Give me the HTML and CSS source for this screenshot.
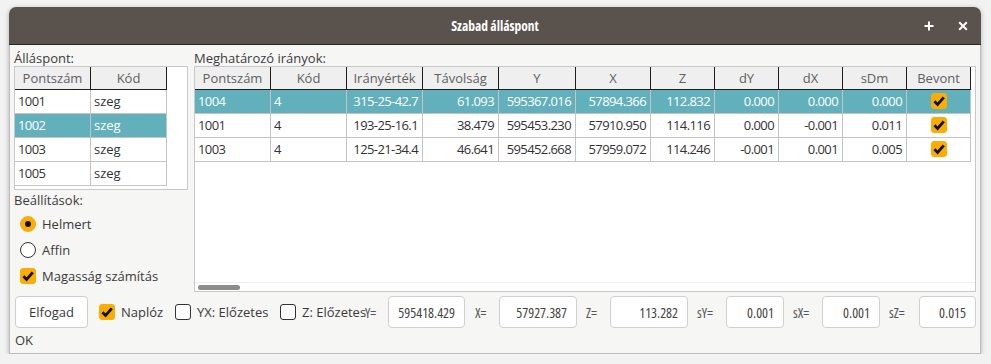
FILE: index.html
```html
<!DOCTYPE html>
<html lang="hu">
<head>
<meta charset="utf-8">
<title>Szabad álláspont</title>
<link rel="stylesheet" href="styles.css">
</head>
<body>
<div class="window">
  <div class="titlebar">
    <div class="tb-spacer"></div>
    <div class="title">Szabad álláspont</div>
    <div class="tb-btns">
      <span class="tb-btn"><svg width="12" height="12" viewBox="0 0 12 12"><path d="M6 1.5V10.5M1.5 6H10.5" stroke="#fff" stroke-width="2"/></svg></span>
      <span class="tb-btn"><svg width="12" height="12" viewBox="0 0 12 12"><path d="M2.2 2.2L9.8 9.8M9.8 2.2L2.2 9.8" stroke="#fff" stroke-width="2"/></svg></span>
    </div>
  </div>
  <div class="content">
    <div class="top">
      <div class="left">
        <div class="label">Álláspont:</div>
        <div class="frame frame-left">
          <div class="grid">
            <div class="row head">
              <div class="c w76 center">Pontszám</div>
              <div class="c w76 center">Kód</div>
            </div>
            <div class="row"><div class="c w76 dig">1001</div><div class="c w76">szeg</div></div>
            <div class="row sel"><div class="c w76 dig">1002</div><div class="c w76">szeg</div></div>
            <div class="row"><div class="c w76 dig">1003</div><div class="c w76">szeg</div></div>
            <div class="row"><div class="c w76 dig">1005</div><div class="c w76">szeg</div></div>
          </div>
        </div>
        <div class="label label-set">Beállítások:</div>
        <div class="opt"><span class="radio on"></span>Helmert</div>
        <div class="opt"><span class="radio"></span>Affin</div>
        <div class="opt"><span class="check on"><svg width="16" height="16" viewBox="0 0 16 16"><path d="M3.4 8.2L6.6 11.4L12.8 4.4" fill="none" stroke="#111" stroke-width="2.8"/></svg></span>Magasság számítás</div>
      </div>
      <div class="right">
        <div class="label">Meghatározó irányok:</div>
        <div class="frame frame-right">
          <div class="grid">
            <div class="row head">
              <div class="c w76 center">Pontszám</div>
              <div class="c w76 center">Kód</div>
              <div class="c w76 center">Irányérték</div>
              <div class="c w76 center">Távolság</div>
              <div class="c w77 center">Y</div>
              <div class="c w75 center">X</div>
              <div class="c w64 center">Z</div>
              <div class="c w64 center">dY</div>
              <div class="c w64 center">dX</div>
              <div class="c w64 center">sDm</div>
              <div class="c w64 center">Bevont</div>
            </div>
            <div class="row sel">
              <div class="c w76 dig">1004</div><div class="c w76">4</div>
              <div class="c w76 num">315-25-42.7</div><div class="c w76 num">61.093</div>
              <div class="c w77 num">595367.016</div><div class="c w75 num">57894.366</div>
              <div class="c w64 num">112.832</div><div class="c w64 num">0.000</div>
              <div class="c w64 num">0.000</div><div class="c w64 num">0.000</div>
              <div class="c w64 center"><span class="check on"><svg width="16" height="16" viewBox="0 0 16 16"><path d="M3.4 8.2L6.6 11.4L12.8 4.4" fill="none" stroke="#111" stroke-width="2.8"/></svg></span></div>
            </div>
            <div class="row">
              <div class="c w76 dig">1001</div><div class="c w76">4</div>
              <div class="c w76 num">193-25-16.1</div><div class="c w76 num">38.479</div>
              <div class="c w77 num">595453.230</div><div class="c w75 num">57910.950</div>
              <div class="c w64 num">114.116</div><div class="c w64 num">0.000</div>
              <div class="c w64 num">-0.001</div><div class="c w64 num">0.011</div>
              <div class="c w64 center"><span class="check on"><svg width="16" height="16" viewBox="0 0 16 16"><path d="M3.4 8.2L6.6 11.4L12.8 4.4" fill="none" stroke="#111" stroke-width="2.8"/></svg></span></div>
            </div>
            <div class="row">
              <div class="c w76 dig">1003</div><div class="c w76">4</div>
              <div class="c w76 num">125-21-34.4</div><div class="c w76 num">46.641</div>
              <div class="c w77 num">595452.668</div><div class="c w75 num">57959.072</div>
              <div class="c w64 num">114.246</div><div class="c w64 num">-0.001</div>
              <div class="c w64 num">0.001</div><div class="c w64 num">0.005</div>
              <div class="c w64 center"><span class="check on"><svg width="16" height="16" viewBox="0 0 16 16"><path d="M3.4 8.2L6.6 11.4L12.8 4.4" fill="none" stroke="#111" stroke-width="2.8"/></svg></span></div>
            </div>
          </div>
          <div class="fill"></div>
          <div class="hscroll"><div class="thumb"></div></div>
        </div>
      </div>
    </div>
    <div class="bottom">
      <div class="btn">Elfogad</div>
      <div class="cgroup g-naplo"><span class="check on"><svg width="16" height="16" viewBox="0 0 16 16"><path d="M3.4 8.2L6.6 11.4L12.8 4.4" fill="none" stroke="#111" stroke-width="2.8"/></svg></span>Naplóz</div>
      <div class="cgroup g-yx"><span class="check"></span>YX: Előzetes</div>
      <div class="cgroup g-z"><span class="check"></span>Z: Előzetes</div>
      <div class="flabel l-y">Y=</div>
      <div class="field f77">595418.429</div>
      <div class="flabel l-x">X=</div>
      <div class="field f78">57927.387</div>
      <div class="flabel l-z">Z=</div>
      <div class="field f78">113.282</div>
      <div class="flabel l-s">sY=</div>
      <div class="field f58">0.001</div>
      <div class="flabel l-s">sX=</div>
      <div class="field f58">0.001</div>
      <div class="flabel l-sz">sZ=</div>
      <div class="field f57">0.015</div>
    </div>
    <div class="status">OK</div>
  </div>
</div>
</body>
</html>
```
FILE: styles.css
```css
* { box-sizing: border-box; }
body {
  margin: 0;
  background: #f2f2f2;
  font-family: "Open Sans", "Noto Sans", sans-serif;
  font-size: 13px;
  color: #3a3a3a;
}
.window {
  margin: 7px 0 0 9px;
  width: 972px;
  height: 347px;
  display: flex;
  flex-direction: column;
  border-radius: 7px 7px 0 0;
  overflow: hidden;
  box-shadow: 0 1px 5px rgba(0,0,0,0.28);
}
.titlebar {
  flex: none;
  height: 38px;
  background: #5a524c;
  border-bottom: 1px solid #2b2724;
  display: grid;
  grid-template-columns: 1fr auto 1fr;
  align-items: center;
}
.title {
  color: #fff;
  font-family: "Open Sans", "Noto Sans", sans-serif;
  font-stretch: 82%;
  font-weight: 700;
  font-size: 13.5px;
}
.tb-btns {
  justify-self: end;
  display: flex;
  gap: 22px;
  padding-right: 12px;
}
.tb-btn { display: flex; width: 12px; height: 12px; }
.content {
  flex: 1;
  background: #f6f6f5;
  border: 1px solid #bdbdbd;
  border-top: none;
  padding: 6px 4px 0 4px;
  display: flex;
  flex-direction: column;
}
.top { display: flex; gap: 6px; height: 241px; }
.left { width: 174px; display: flex; flex-direction: column; }
.right { flex: 1; display: flex; flex-direction: column; }
.label { height: 15px; line-height: 15px; color: #3c3c3c; }
.frame {
  border: 1px solid #c8c8c8;
  background: #fff;
}
.frame-left { height: 124px; }
.frame-right { height: 226px; display: flex; flex-direction: column; }
.grid { display: flex; flex-direction: column; }
.row { display: flex; height: 24px; }
.row.head { height: 23px; }
.c {
  flex: none;
  border-right: 1px solid #c4c4c4;
  border-bottom: 1px solid #c4c4c4;
  padding: 0 3px;
  line-height: 23px;
  white-space: nowrap;
  overflow: hidden;
  color: #333;
}
.head .c {
  background: #efefef;
  color: #606060;
  border-right-color: #1e1e1e;
  border-bottom-color: #1e1e1e;
  line-height: 22px;
}
.sel .c { background: #62b0bc; color: #fff; }
.center { text-align: center; }
.num { text-align: right; letter-spacing: -0.6px; padding-right: 4px; }
.dig { letter-spacing: -0.6px; }
.w76 { width: 76px; }
.w77 { width: 77px; }
.w75 { width: 75px; }
.w64 { width: 64px; }
.c .check { vertical-align: middle; margin-top: -3px; }
.fill { flex: 1; }
.hscroll { height: 9px; border-top: 1px solid #efefef; }
.thumb {
  width: 42px; height: 5px; margin: 2px 0 0 3px;
  border-radius: 3px; background: #8c8c8c;
}
.label-set { margin-top: 3px; margin-bottom: 3px; }
.opt {
  height: 26px;
  display: flex;
  align-items: center;
  gap: 6px;
  padding-left: 6px;
  color: #3a3a3a;
}
.radio {
  width: 16px; height: 16px; border-radius: 50%;
  border: 1px solid #333; background: #fff;
  display: inline-flex; align-items: center; justify-content: center;
  flex: none;
}
.radio.on { background: #fbad00; border-color: #fbad00; }
.radio.on::after {
  content: ""; width: 6px; height: 6px; border-radius: 50%; background: #111;
}
.check {
  width: 16px; height: 16px; border-radius: 3px;
  border: 1px solid #333; background: #fff;
  display: inline-flex; flex: none;
}
.check.on { background: #fbad00; border-color: #fbad00; }
.check svg { margin: -1px; }
.bottom {
  margin-top: 4px;
  height: 32px;
  display: flex;
  align-items: center;
}
.btn {
  width: 73px; height: 32px; margin-left: 1px;
  background: #fff; border: 1px solid #cfcfcf; border-radius: 4px;
  display: flex; align-items: center; justify-content: center;
  color: #3a3a3a;
}
.cgroup {
  display: flex; align-items: center; gap: 6px;
  white-space: nowrap; flex: none; overflow: visible;
}
.g-naplo { margin-left: 11px; width: 76px; }
.g-yx { width: 105px; }
.g-z { width: 85px; }
.flabel {
  flex: none;
  font-stretch: 78%;
  color: #555;
  font-size: 14px;
}
.l-y { width: 23px; }
.l-x { width: 34px; padding-left: 10px; }
.l-z { width: 33px; padding-left: 9px; }
.l-s { width: 38px; padding-left: 9px; }
.l-sz { width: 39px; padding-left: 9px; }
.field {
  flex: none;
  height: 32px;
  background: #fff;
  border: 1px solid #d0d0d0;
  border-radius: 4px;
  display: flex; align-items: center; justify-content: flex-end;
  padding-right: 9px;
  font-stretch: 78%;
  font-size: 14px;
  color: #444;
}
.f77 { width: 77px; }
.f78 { width: 78px; }
.f58 { width: 58px; }
.f57 { width: 57px; }
.status {
  margin-top: 5px;
  padding-left: 1px;
  height: 15px;
  line-height: 15px;
  color: #3a3a3a;
}
```
